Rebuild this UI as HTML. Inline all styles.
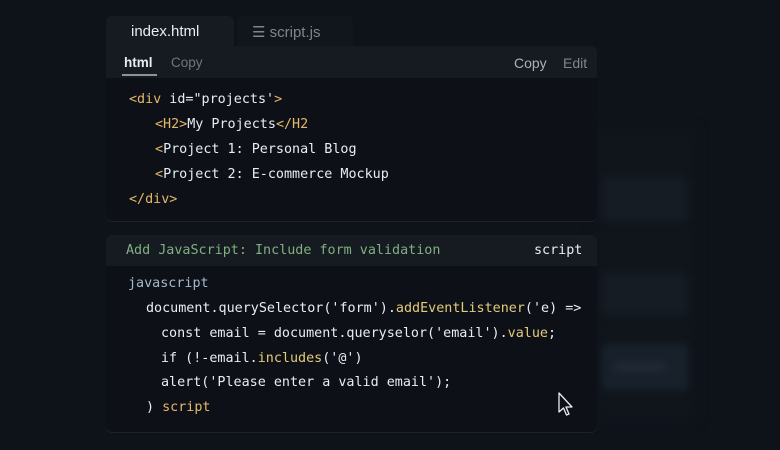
<!DOCTYPE html>
<html><head><style>
*{margin:0;padding:0;box-sizing:border-box}
body{width:780px;height:450px;background:#0e131a;position:relative;overflow:hidden;font-family:"Liberation Sans",sans-serif}
.abs{position:absolute}
.mono{font-family:"DejaVu Sans Mono","Liberation Mono",monospace;font-size:13.4px;white-space:pre;position:absolute;line-height:18px}
.blur{position:absolute;background:#161c24;filter:blur(4px);border-radius:4px}
</style></head><body>
<div class="abs" style="left:596px;top:130px;width:100px;height:290px;background:#10151c;filter:blur(6px)"></div>
<div class="blur" style="left:602px;top:177px;width:86px;height:44px"></div>
<div class="blur" style="left:602px;top:273px;width:86px;height:42px"></div>
<div class="blur" style="left:602px;top:344px;width:86px;height:46px;background:#18212b"></div>
<div class="blur" style="left:614px;top:363px;width:52px;height:8px;background:#222b36"></div>

<!-- tabs -->
<div class="abs" style="left:106px;top:16px;width:128px;height:32px;background:#161b22;border-radius:6px 6px 0 0"></div>
<div class="abs" style="left:131px;top:23px;color:#e6edf3;font-size:15px">index.html</div>
<div class="abs" style="left:237px;top:16px;width:116px;height:30px;background:#11161d;border-radius:6px 6px 0 0"></div>
<div class="abs" style="left:252px;top:23px;color:#7d8590;font-size:15px">☰ script.js</div>

<!-- card 1 -->
<div class="abs" style="left:106px;top:46px;width:491px;height:175px;background:#0d1117;border-radius:0 6px 6px 6px;box-shadow:0 1px 0 #1c222a"></div>
<div class="abs" style="left:106px;top:46px;width:491px;height:32px;background:#161b22;border-radius:0 6px 0 0"></div>
<div class="abs" style="left:124px;top:55px;color:#e6edf3;font-size:13.5px;font-weight:bold">html</div>
<div class="abs" style="left:122px;top:74px;width:35px;height:2px;background:#8b949e"></div>
<div class="abs" style="left:171px;top:55px;color:#6e7681;font-size:13.5px">Copy</div>
<div class="abs" style="left:514px;top:55px;color:#a9b1ba;font-size:14px">Copy</div>
<div class="abs" style="left:563px;top:55px;color:#7d8590;font-size:14px">Edit</div>
<div class="mono" style="left:129px;top:91px;color:#e6edf3"><span style="color:#e3b86b">&lt;div</span> id="projects'<span style="color:#e3b86b">&gt;</span></div>
<div class="mono" style="left:155px;top:116px;color:#e6edf3"><span style="color:#e3b86b">&lt;H2&gt;</span>My Projects<span style="color:#e3b86b">&lt;/H2</span></div>
<div class="mono" style="left:155px;top:141px;color:#e6edf3"><span style="color:#e3b86b">&lt;</span>Project 1: Personal Blog</div>
<div class="mono" style="left:155px;top:166px;color:#e6edf3"><span style="color:#e3b86b">&lt;</span>Project 2: E-commerce Mockup</div>
<div class="mono" style="left:129px;top:191px;color:#e3b86b">&lt;/div&gt;</div>

<!-- card 2 -->
<div class="abs" style="left:106px;top:235px;width:491px;height:197px;background:#0d1117;border-radius:6px;box-shadow:0 1px 0 #1c222a"></div>
<div class="abs" style="left:106px;top:235px;width:491px;height:31px;background:#161b22;border-radius:6px 6px 0 0"></div>
<div class="mono" style="left:126px;top:242px;color:#7fb07f">Add JavaScript: Include form validation</div>
<div class="mono" style="left:534px;top:242px;color:#e6edf3">script</div>
<div class="mono" style="left:128px;top:275px;color:#a5b8cc">javascript</div>
<div class="mono" style="left:146px;top:300px;color:#e6edf3">document.querySelector('form').<span style="color:#e3cb7a">addEventListener</span>('e) =&gt;</div>
<div class="mono" style="left:161px;top:325px;color:#e6edf3">const email = document.queryselor('email').<span style="color:#e3cb7a">value</span>;</div>
<div class="mono" style="left:161px;top:350px;color:#e6edf3">if (!-email.<span style="color:#e3cb7a">includes</span>('@')</div>
<div class="mono" style="left:161px;top:374px;color:#e6edf3">alert('Please enter a valid email');</div>
<div class="mono" style="left:146px;top:399px;color:#e6edf3">) <span style="color:#e3b86b">script</span></div>

<svg class="abs" style="left:557px;top:392px" width="18" height="26" viewBox="0 0 18 26"><path d="M2 1 L2 20 L6.5 16 L9.5 23 L12 22 L9 15 L15 15 Z" fill="#0d1117" stroke="#e6edf3" stroke-width="1.3" stroke-linejoin="round"/></svg>
</body></html>
